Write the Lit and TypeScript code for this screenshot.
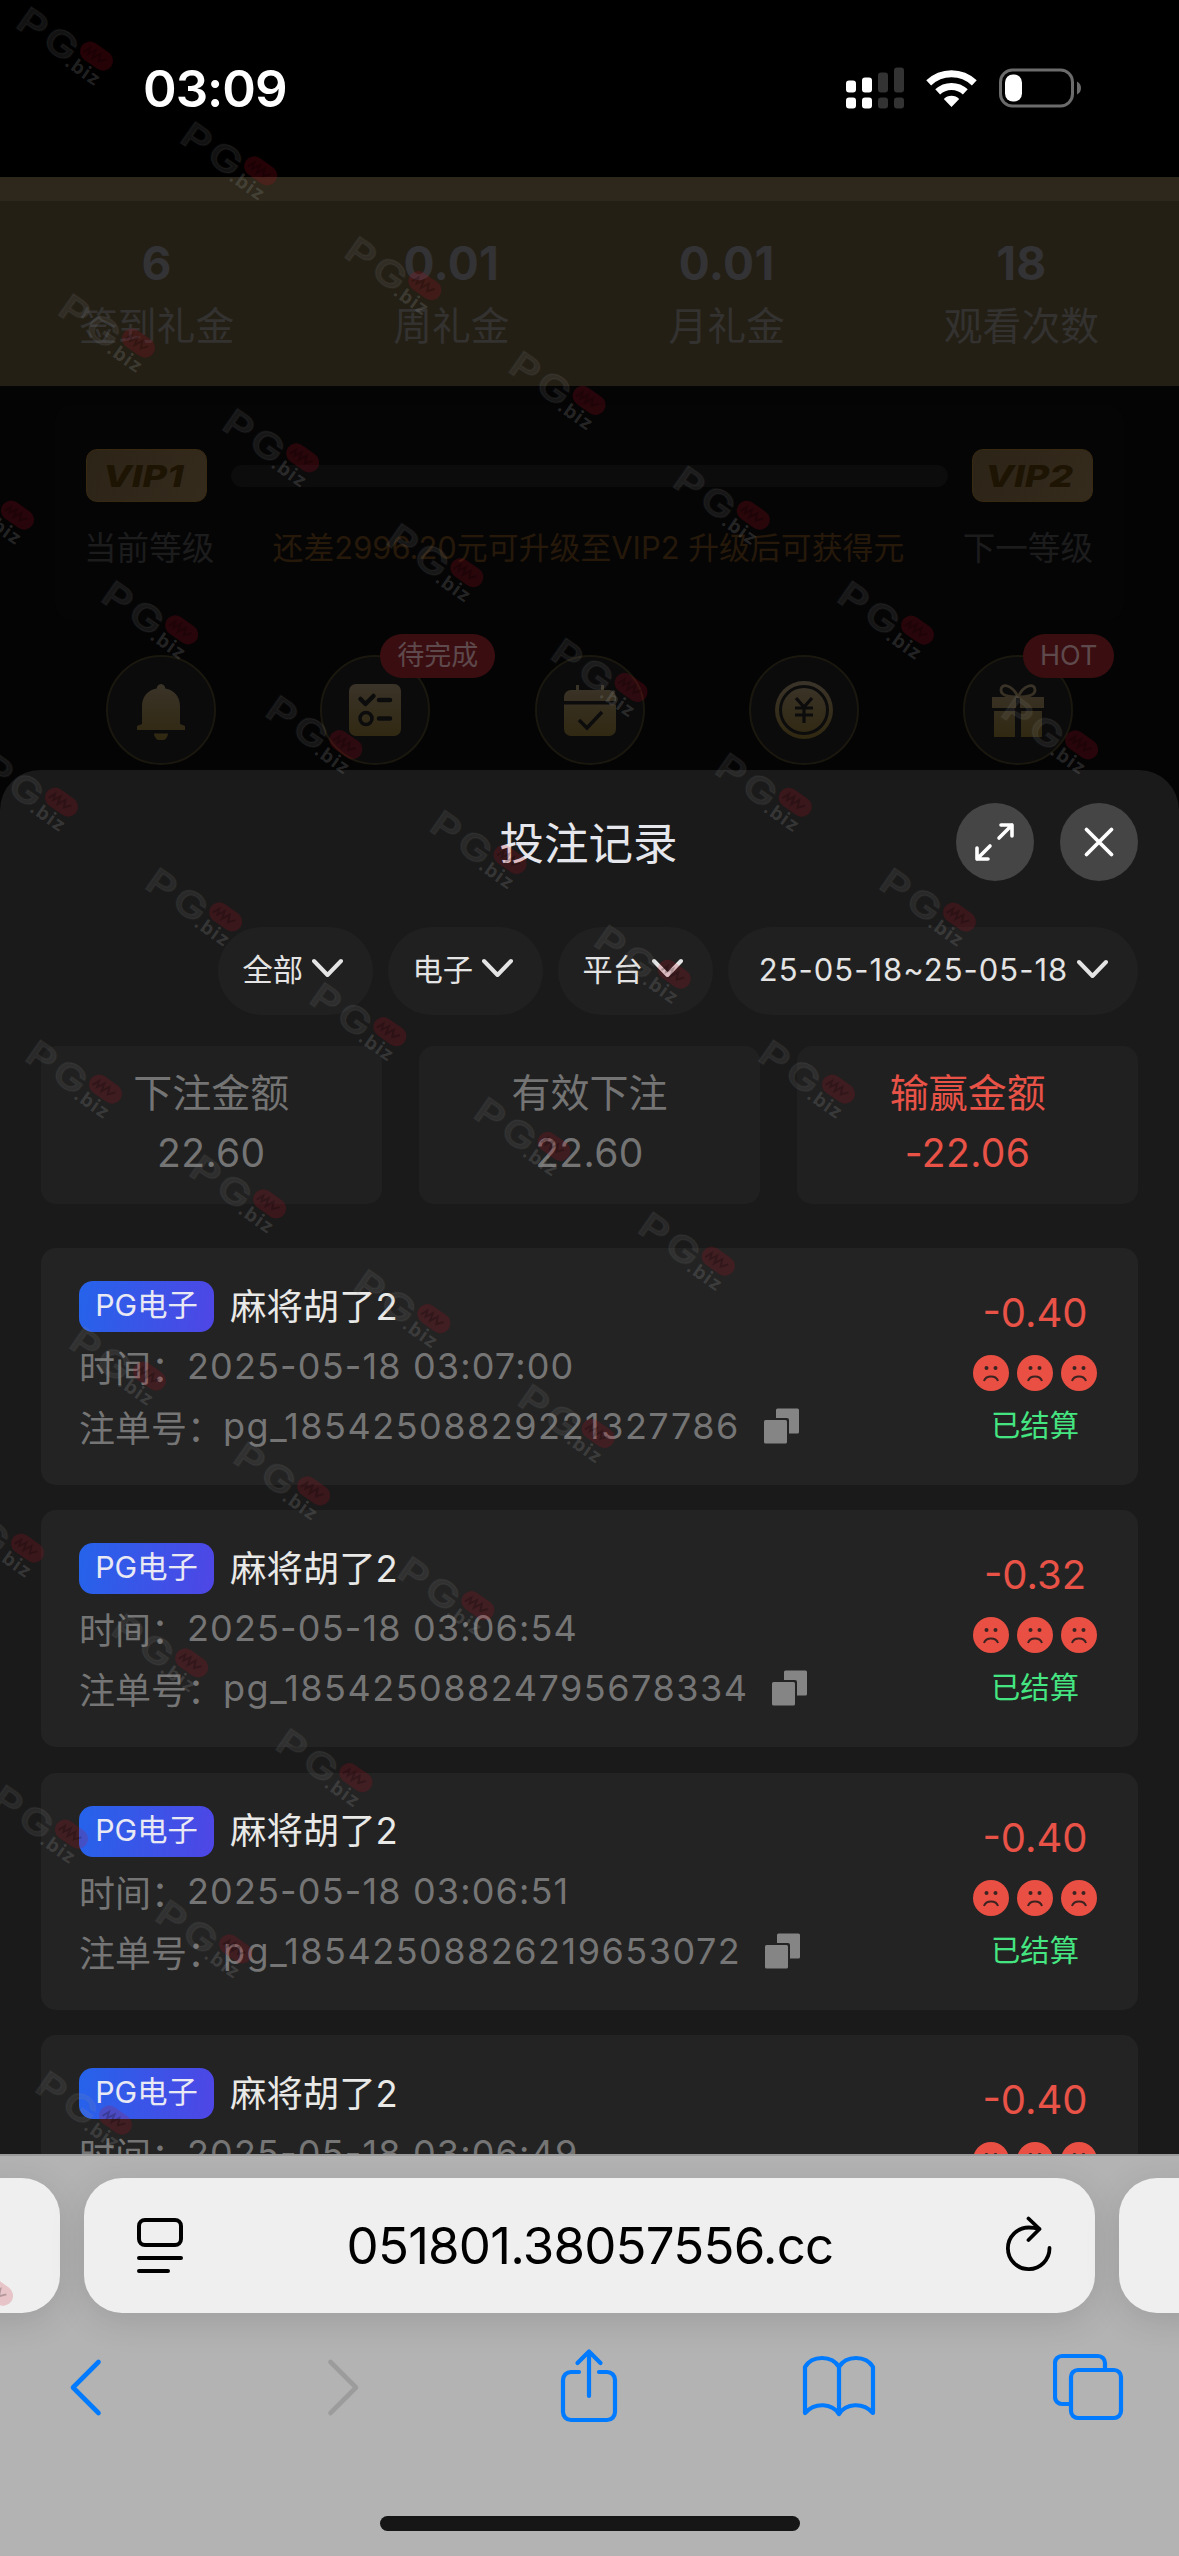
import { LitElement, html, svg, css } from "lit";
import { customElement, property } from "lit/decorators.js";

const FONT = css`Inter, "Noto Sans CJK SC", sans-serif`;

interface Bet {
  time: string;
  id: string;
  amount: string;
}

const BETS: Bet[] = [
  { time: "2025-05-18 03:07:00", id: "pg_18542508829221327786", amount: "-0.40" },
  { time: "2025-05-18 03:06:54", id: "pg_18542508824795678334", amount: "-0.32" },
  { time: "2025-05-18 03:06:51", id: "pg_18542508826219653072", amount: "-0.40" },
  { time: "2025-05-18 03:06:49", id: "", amount: "-0.40" },
];

const STATS = [
  ["6", "签到礼金"],
  ["0.01", "周礼金"],
  ["0.01", "月礼金"],
  ["18", "观看次数"],
];

/* Start of each diagonal run of marks: x, y, how many follow it. */
const MARK_RUNS: [number, number, number][] = [
  [18, 6, 7],
  [60, 293, 6],
  [-61, 465, 6],
  [-17, 752, 5],
  [27, 1039, 4],
  [71, 1326, 3],
  [-51, 1498, 3],
  [-7, 1784, 2],
  [37, 2070, 1],
  [-82, 2241, 1],
];

@customElement("mark-layer")
class MarkLayer extends LitElement {
  static styles = css`
    :host { position: absolute; inset: 0; overflow: hidden; pointer-events: none; }
    svg { display: block; }
    .pg { font: 600 36px ${FONT}; letter-spacing: 3px; fill: rgba(150, 150, 150, 0.14); stroke: rgba(150, 150, 150, 0.06); stroke-width: 2; }
    .biz { font: 700 19px ${FONT}; letter-spacing: 1.2px; fill: rgba(150, 150, 150, 0.24); }
    .lozenge { fill: rgba(190, 12, 32, 0.19); }
    .scrawl { fill: none; stroke: rgba(0, 0, 0, 0.22); stroke-width: 2; }
  `;
  render() {
    const marks: [number, number][] = [];
    for (const [x, y, n] of MARK_RUNS)
      for (let i = 0; i < n; i++) marks.push([x + i * 164.2, y + i * 114.8]);
    return html`<svg width="1179" height="2556" viewBox="0 0 1179 2556">
      ${marks.map(
        ([x, y]) => svg`<g transform="translate(${x} ${y}) rotate(35)">
          <text class="pg" transform="translate(8 19) scale(1.24 1)">PG</text>
          <rect class="lozenge" x="75" y="-14" width="36" height="20" rx="10"></rect>
          <path class="scrawl" d="M80 0 l3 -7 l2 6 l4 -7 l2 8 l4 -8 l3 7 l5 -6"></path>
          <text class="biz" x="71" y="22">.biz</text>
        </g>`
      )}
    </svg>`;
  }
}

@customElement("status-bar")
class StatusBar extends LitElement {
  static styles = css`
    :host { display: flex; height: 177px; box-sizing: border-box; padding: 0 98px 0 143px; align-items: center; justify-content: space-between; background: #000; color: #fff; }
    .time { font: 600 51px/60px ${FONT}; letter-spacing: -1px; }
    .icons { display: flex; }
  `;
  render() {
    return html`
      <span class="time">03:09</span>
      <svg class="icons" width="240" height="60" viewBox="841 58.500 240 60">
        <g fill="#fff">
          <rect x="846" y="80" width="10" height="12" rx="3"></rect>
          <rect x="862" y="77" width="10" height="15" rx="3"></rect>
          <rect x="846" y="97" width="10" height="11" rx="3"></rect>
          <rect x="862" y="97" width="10" height="11" rx="3"></rect>
        </g>
        <g fill="#333">
          <rect x="878" y="72" width="10" height="20" rx="3"></rect>
          <rect x="894" y="67" width="10" height="25" rx="3"></rect>
          <rect x="878" y="97" width="10" height="11" rx="3"></rect>
          <rect x="894" y="97" width="10" height="11" rx="3"></rect>
        </g>
        <g fill="none" stroke="#fff" stroke-width="7">
          <path d="M928.7 82.4 A33 33 0 0 1 974.3 82.4"></path>
          <path d="M937.7 91.4 A20 20 0 0 1 965.3 91.4"></path>
        </g>
        <path d="M951.5 106.4 L943.8 98.5 A11 11 0 0 1 959.2 98.5 Z" fill="#fff"></path>
        <rect x="1000.5" y="69.5" width="72" height="36" rx="12" fill="none" stroke="#6b6b6b" stroke-width="3"></rect>
        <rect x="1005" y="74" width="17" height="27" rx="8" fill="#fff"></rect>
        <path d="M1077 81 q4 2 4 6.500 q0 4.500 -4 6.500 z" fill="#6b6b6b"></path>
      </svg>
    `;
  }
}

@customElement("member-panel")
class MemberPanel extends LitElement {
  static styles = css`
    :host { display: block; height: 593px; background: #040405; font-family: ${FONT}; }
    .strip { height: 24px; background: #2d281b; }
    .stats { height: 185px; box-sizing: border-box; padding: 37px 80px 0 79px; display: flex; justify-content: space-between; background: #231f15; }
    .stat { display: flex; flex-direction: column; align-items: center; color: #333230; }
    .num { font-weight: 700; font-size: 46px; line-height: 50px; color: #333335; letter-spacing: 0.3px; }
    .lab { font-size: 38.800px; line-height: 50px; margin-top: 13px; }
    .level { height: 215px; margin: 19px 55px 0; border-radius: 16px; background: #050506; box-sizing: border-box; padding: 44px 31px 0; }
    .bar-row { display: flex; align-items: center; justify-content: space-between; }
    .vip { width: 121px; height: 53px; box-sizing: border-box; border-radius: 11px; display: flex; align-items: center; justify-content: center; background: linear-gradient(120deg, #2c2417, #352b1d); border: 1px solid #382911; color: #1d1404; font: italic 800 30px/1 ${FONT}; }
    .vip span { transform: translateX(-3px) scaleX(1.25); }
    .track { width: 717px; height: 22px; border-radius: 11px; background: #0c0c0d; }
    .hints { display: flex; justify-content: space-between; align-items: center; margin: 24px 0 0 -2px; line-height: 44px; font-size: 32.600px; color: #1c1c1d; }
    .gold { font-size: 30.900px; color: #26190a; white-space: nowrap; }
    .menu { display: flex; justify-content: space-between; padding: 0 106px; margin-top: 35px; }
    .item { position: relative; width: 110px; height: 110px; box-sizing: border-box; border-radius: 50%; background: #0b0b0c; border: 2px solid #1a170e; display: flex; align-items: center; justify-content: center; }
    .flag { position: absolute; left: 58px; top: -23px; height: 44px; line-height: 43px; padding: 0 17px; border-radius: 22px; background: #3a0e10; color: #5e494c; font-size: 27px; white-space: nowrap; }
  `;
  private icon(i: number) {
    const ink = "#0c0c0d";
    const shapes = [
      svg`<path d="M30 4 a4.500 4.500 0 0 1 4.300 4.600 C43 10 49 17 49 26 V44 L54 46 V50 H6 V46 L11 44 V26 C11 17 17 10 25.700 8.600 A4.500 4.500 0 0 1 30 4Z"></path><path d="M23 53.500 H37 a7 7 0 0 1 -14 0Z"></path>`,
      svg`<rect x="4" y="4" width="52" height="52" rx="7"></rect><g fill="none" stroke="${ink}" stroke-width="4.500" stroke-linecap="round" stroke-linejoin="round"><path d="M15.500 19 l5 5 l8 -8"></path><path d="M34 20 H45 M34 38.500 H45"></path><circle cx="21" cy="38.500" r="6" stroke-width="3.500"></circle></g>`,
      svg`<path d="M16 5 h3 v5 h22 v-5 h3 v5 h5 a7 7 0 0 1 7 7 v4 H4 v-4 a7 7 0 0 1 7 -7 h5Z"></path><path d="M4 24.500 H56 V49 a7 7 0 0 1 -7 7 H11 a7 7 0 0 1 -7 -7Z"></path><path d="M19 40 l8 8 l15 -16" fill="none" stroke="${ink}" stroke-width="3.500"></path>`,
      svg`<circle cx="30" cy="30" r="29"></circle><circle cx="30" cy="30" r="23.500" fill="none" stroke="${ink}" stroke-width="3"></circle><path d="M22 18 l8 9 l8 -9 M30 27 V43 M21 28 H39 M21 35 H39" fill="none" stroke="${ink}" stroke-width="3.200"></path>`,
      svg`<path d="M4 17 H56 V28 H4Z M6 31 H27 V57 H6Z M33 31 H54 V57 H33Z"></path><path d="M30 17 C24 4 13 3 13 10 C13 16 22 17 30 17 C38 17 47 16 47 10 C47 3 36 4 30 17" fill="none" stroke="url(#g)" stroke-width="2.800"></path><path d="M30 18 V57" stroke="${ink}" stroke-width="4"></path>`,
    ];
    return html`<svg width="60" height="60" viewBox="0 0 60 60">
      <defs><linearGradient id="g" x1="0" y1="0" x2="0" y2="60" gradientUnits="userSpaceOnUse"><stop offset="0" stop-color="#3b342a"></stop><stop offset="1" stop-color="#302810"></stop></linearGradient></defs>
      <g fill="url(#g)">${shapes[i]}</g>
    </svg>`;
  }
  render() {
    const flags = ["", "待完成", "", "", "HOT"];
    return html`
      <div class="strip"></div>
      <div class="stats">
        ${STATS.map(([n, l]) => html`<div class="stat"><span class="num">${n}</span><span class="lab">${l}</span></div>`)}
      </div>
      <div class="level">
        <div class="bar-row"><span class="vip"><span>VIP1</span></span><span class="track"></span><span class="vip"><span>VIP2</span></span></div>
        <div class="hints"><span>当前等级</span><span class="gold">还差2996.20元可升级至VIP2 升级后可获得元</span><span>下一等级</span></div>
      </div>
      <div class="menu">
        ${flags.map((f, i) => html`<div class="item">${this.icon(i)}${f ? html`<span class="flag">${f}</span>` : null}</div>`)}
      </div>
    `;
  }
}

@customElement("bet-card")
class BetCard extends LitElement {
  @property({ attribute: false }) bet!: Bet;
  static styles = css`
    :host { display: flex; flex: none; height: 237px; box-sizing: border-box; border-radius: 15px; background: #232323; padding: 33px 40px 0 38px; justify-content: space-between; font-family: ${FONT}; color: #757575; }
    .line { display: flex; align-items: center; height: 60px; font-size: 36px; white-space: pre; }
    .head { height: 51px; margin-bottom: 4px; }
    .tag { height: 51px; line-height: 49px; width: 135px; text-align: center; border-radius: 14px; background: linear-gradient(100deg, #2563eb, #4f46e5); color: #e9e9f4; font-size: 30.300px; }
    .name { margin-left: 16px; padding-bottom: 6px; color: #e9e9e7; font-size: 36.400px; }
    .when { letter-spacing: 1.150px; }
    .code { letter-spacing: 1.500px; }
    .copy { margin-left: 24px; }
    .side { display: flex; flex-direction: column; align-items: center; width: 126px; }
    .amount { font-size: 40px; line-height: 50px; margin-top: 7px; color: #e85247; white-space: nowrap; }
    .faces { display: flex; gap: 8px; margin-top: 17px; }
    .state { font-size: 29.300px; line-height: 40px; margin-top: 15px; color: #45e581; }
  `;
  render() {
    const face = html`<svg width="36" height="36" viewBox="0 0 36 36">
      <circle cx="18" cy="18" r="18" fill="#e94f43"></circle>
      <circle cx="13.500" cy="13" r="2" fill="#3a2321"></circle>
      <circle cx="22.500" cy="13" r="2" fill="#3a2321"></circle>
      <path d="M11 26 a7.200 6 0 0 1 14 0" fill="none" stroke="#3a2321" stroke-width="2"></path>
    </svg>`;
    return html`
      <div>
        <div class="line head"><span class="tag">PG电子</span><span class="name">麻将胡了2</span></div>
        <div class="line"><span>时间：</span><span class="when">${this.bet.time}</span></div>
        ${this.bet.id
          ? html`<div class="line"><span>注单号：</span><span class="code">${this.bet.id}</span><svg class="copy" width="35" height="36" viewBox="0 0 35 36" fill="#858585"><path d="M12 2 a1.500 1.500 0 0 1 1.500 -1.500 h20 a1.500 1.500 0 0 1 1.500 1.500 v22 a1.500 1.500 0 0 1 -1.500 1.500 h-8.500 v-13.500 a2 2 0 0 0 -2 -2 h-11z"></path><rect x="0" y="12" width="23" height="23.500" rx="1.500"></rect></svg></div>`
          : null}
      </div>
      <div class="side">
        <span class="amount">${this.bet.amount}</span>
        <div class="faces">${face}${face}${face}</div>
        ${this.bet.id ? html`<span class="state">已结算</span>` : null}
      </div>
    `;
  }
}

@customElement("record-sheet")
class RecordSheet extends LitElement {
  static styles = css`
    :host { display: block; height: 1384px; background: #040405; font-family: ${FONT}; }
    .sheet { height: 1384px; box-sizing: border-box; overflow: hidden; border-radius: 40px 40px 0 0; background: #1a1a1a; padding: 33px 41px 0; }
    .top { display: grid; grid-template-columns: 1fr auto 1fr; align-items: center; height: 78px; }
    .title { grid-column: 2; font-size: 44.500px; line-height: 60px; padding-top: 3px; margin-left: -2px; color: #e6e7ec; }
    .tools { display: flex; gap: 26px; justify-content: flex-end; }
    .round { width: 78px; height: 78px; border-radius: 50%; background: #454545; }
    .filters { display: flex; justify-content: flex-end; gap: 15.500px; margin-top: 46px; }
    .pill { display: flex; align-items: center; justify-content: center; height: 88px; width: 154.500px; box-sizing: border-box; padding: 0 5px 6px 0; border-radius: 44px; background: #202020; color: #e4e4e4; font-size: 30.300px; gap: 9px; white-space: nowrap; }
    .wide { width: 410px; font-size: 31px; letter-spacing: 1px; padding: 0 0 4px 1px; }
    .sums { display: grid; grid-template-columns: repeat(3, 1fr); gap: 37.500px; margin-top: 31px; }
    .sum { height: 158px; box-sizing: border-box; padding-top: 22px; border-radius: 15px; background: #202020; display: flex; flex-direction: column; align-items: center; color: #747474; font-size: 39px; line-height: 50px; }
    .sum b { font-weight: 400; margin-top: 10px; letter-spacing: 0.400px; }
    .sum.red { color: #e85247; }
    .list { display: flex; flex-direction: column; gap: 25.400px; margin-top: 44px; }
  `;
  render() {
    const arrow = html`<svg width="31" height="20" viewBox="0 0 31 20"><path d="M2 3 L15.500 17 L29 3" fill="none" stroke="#e4e4e4" stroke-width="4" stroke-linecap="round" stroke-linejoin="round"></path></svg>`;
    return html`<div class="sheet">
      <div class="top">
        <span class="title">投注记录</span>
        <div class="tools">
          <svg class="round" viewBox="0 0 78 78" fill="none" stroke="#fff" stroke-width="3.600" stroke-linecap="round" stroke-linejoin="round"><path d="M43 35 L56 22 M45 22 H56 V33 M34 43 L21 56 M21 45 V56 H32"></path></svg>
          <svg class="round" viewBox="0 0 78 78" fill="none" stroke="#fff" stroke-width="3.800" stroke-linecap="round"><path d="M26.500 26.500 L51.500 51.500 M51.500 26.500 L26.500 51.500"></path></svg>
        </div>
      </div>
      <div class="filters">
        ${["全部", "电子", "平台"].map((t) => html`<span class="pill">${t}${arrow}</span>`)}
        <span class="pill wide">25-05-18~25-05-18${arrow}</span>
      </div>
      <div class="sums">
        <div class="sum">下注金额<b>22.60</b></div>
        <div class="sum">有效下注<b>22.60</b></div>
        <div class="sum red">输赢金额<b>-22.06</b></div>
      </div>
      <div class="list">${BETS.map((b) => html`<bet-card .bet=${b}></bet-card>`)}</div>
    </div>`;
  }
}

@customElement("browser-bar")
class BrowserBar extends LitElement {
  static styles = css`
    :host { display: flex; flex-direction: column; height: 402px; box-sizing: border-box; background: #b3b3b3; border-top: 2px solid #9a9a9a; overflow: hidden; }
    .tabs { display: flex; justify-content: center; gap: 24px; margin-top: 22px; }
    .tab { flex: none; width: 1011px; height: 135px; box-sizing: border-box; border-radius: 38px; background: #efefef; box-shadow: 0 8px 36px rgba(0, 0, 0, 0.12); display: flex; align-items: center; justify-content: space-between; padding: 0 43px 0 53px; }
    .url { font: 400 51px/60px ${FONT}; color: #000; letter-spacing: -0.8px; margin-left: -9px; }
    .nav { display: flex; margin-top: 31px; padding-left: 61px; }
    .forward { margin-left: 207px; }
    .share { margin-left: 191px; }
    .book { margin-left: 182px; }
    .windows { margin-left: 176px; }
    .home { width: 420px; height: 15px; border-radius: 8px; background: #161616; margin: 92px auto 0; }
  `;
  render() {
    return html`
      <div class="tabs">
        <div class="tab"></div>
        <div class="tab">
          <svg width="46" height="56" viewBox="0 0 46 56" fill="none" stroke="#000" stroke-width="4" stroke-linecap="round"><rect x="2" y="2" width="42" height="25" rx="6"></rect><path d="M2 40 H44 M2 53 H31"></path></svg>
          <span class="url">051801.38057556.cc</span>
          <svg width="46" height="60" viewBox="0 0 46 60" fill="none" stroke="#000" stroke-width="3.800" stroke-linecap="round" stroke-linejoin="round"><path d="M43.500 32 A20.800 20.800 0 1 1 22.700 11.500 C27 11.500 30 12 33 13"></path><path d="M22.500 2.500 L33.500 13 L22.500 24"></path></svg>
        </div>
        <div class="tab"></div>
      </div>
      <div class="nav">
        <svg width="50" height="80" viewBox="0 0 50 80" fill="none" stroke="#007aff" stroke-width="4.600" stroke-linecap="round" stroke-linejoin="round"><path d="M37.500 18 L12 43.500 L37.500 69"></path></svg>
        <svg class="forward" width="50" height="80" viewBox="0 0 50 80" fill="none" stroke="#9c9c9c" stroke-width="4.600" stroke-linecap="round" stroke-linejoin="round"><path d="M12.500 18 L38 43.500 L12.500 69"></path></svg>
        <svg class="share" width="60" height="80" viewBox="0 0 60 80" fill="none" stroke="#007aff" stroke-width="4.200" stroke-linecap="round" stroke-linejoin="round"><path d="M20 28 H12 a8 8 0 0 0 -8 8 V68 a8 8 0 0 0 8 8 H48 a8 8 0 0 0 8 -8 V36 a8 8 0 0 0 -8 -8 H40 M30 52 V8 M18.500 19 L30 7.500 L41.500 19"></path></svg>
        <svg class="book" width="76" height="80" viewBox="0 0 76 80" fill="none" stroke="#007aff" stroke-width="4.200" stroke-linecap="round" stroke-linejoin="round"><path d="M38 70 C31 59 14 58 4 69 V23 C11 11 31 11 38 23 C45 11 65 11 72 23 V69 C62 58 45 59 38 70 V23"></path></svg>
        <svg class="windows" width="72" height="80" viewBox="0 0 72 80" fill="none" stroke="#007aff" stroke-width="4.200" stroke-linecap="round" stroke-linejoin="round"><rect x="18" y="26" width="50" height="48" rx="7"></rect><path d="M52 25 V19 a7 7 0 0 0 -7 -7 H9 a7 7 0 0 0 -7 7 V53 a7 7 0 0 0 7 7 H17"></path></svg>
      </div>
      <div class="home"></div>
    `;
  }
}

@customElement("app-root")
class AppRoot extends LitElement {
  static styles = css`
    :host { display: block; position: relative; width: 1179px; height: 2556px; overflow: hidden; background: #000; }
  `;
  render() {
    return html`
      <status-bar></status-bar>
      <member-panel></member-panel>
      <record-sheet></record-sheet>
      <browser-bar></browser-bar>
      <mark-layer></mark-layer>
    `;
  }
}
